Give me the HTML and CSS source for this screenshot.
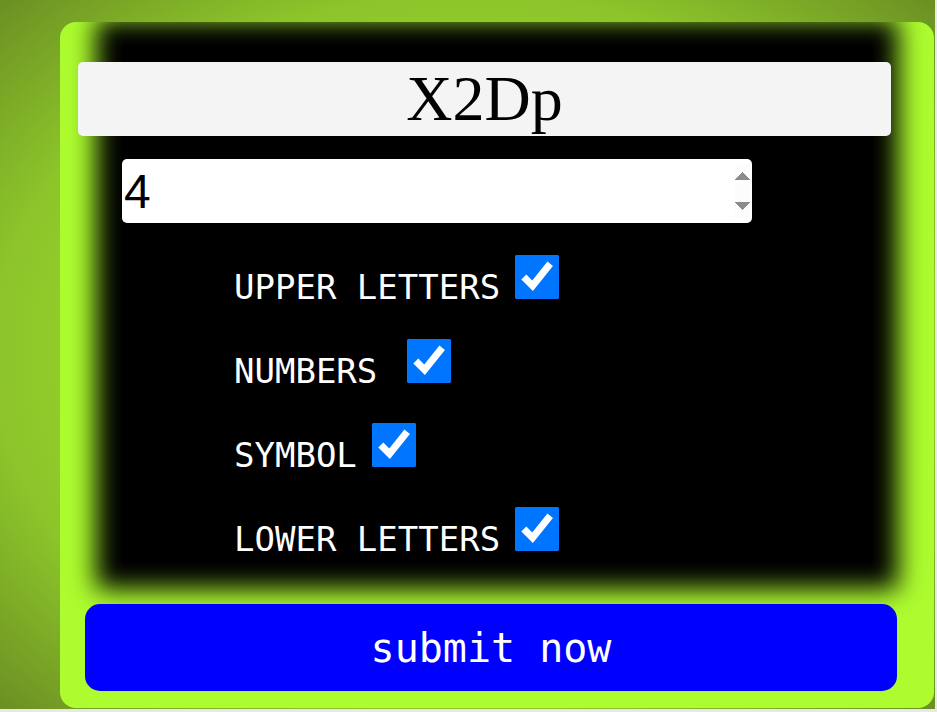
FILE: index.html
```html
<!DOCTYPE html>
<html lang="en">
<head>
<meta charset="utf-8">
<title>X2Dp</title>
<link rel="stylesheet" href="styles.css">
</head>
<body>
<form class="card">
  <div class="panel">
    <div class="title">X2Dp</div>
    <input class="length" type="number" value="4">
    <div class="options">
      <div class="opt"><span class="opt-label">UPPER LETTERS</span><input class="opt-box" type="checkbox" checked></div>
      <div class="opt"><span class="opt-label">NUMBERS</span><input class="opt-box opt-box-wide" type="checkbox" checked></div>
      <div class="opt"><span class="opt-label">SYMBOL</span><input class="opt-box" type="checkbox" checked></div>
      <div class="opt"><span class="opt-label">LOWER LETTERS</span><input class="opt-box" type="checkbox" checked></div>
    </div>
  </div>
  <button class="submit" type="button">submit now</button>
</form>
</body>
</html>
```
FILE: styles.css
```css
html {
  background: #e8e8e8;
  height: 100%;
}

body {
  margin: 0 2px 0 0;
  height: 709px;
  box-sizing: border-box;
  padding: 22px 0 0 60px;
  background: radial-gradient(ellipse at center, #a6f02e 0%, #97d52b 50%, #8cc42a 72%, #6b8f23 100%);
  overflow: hidden;
}

.card {
  margin: 0;
  width: 874px;
  height: 686px;
  background: #adfc2f;
  border-radius: 16px;
  overflow: hidden;
}

.panel {
  margin: 23px 62px 0;
  height: 518px;
  box-sizing: border-box;
  padding-top: 17px;
  background: #000;
  box-shadow: 0 0 24px 26px #000;
}

.title {
  margin-left: -44px;
  width: 813px;
  height: 74px;
  line-height: 74px;
  background: #f4f4f4;
  border-radius: 5px;
  text-align: center;
  font-family: "Liberation Serif", "Times New Roman", serif;
  font-size: 64px;
  color: #000;
}

.length {
  display: block;
  margin: 23px 0 0 0;
  width: 630px;
  height: 64px;
  box-sizing: border-box;
  padding: 7px 2px;
  border: none;
  border-radius: 5px;
  background: #fff;
  font-family: "Liberation Sans", Arial, sans-serif;
  font-size: 48px;
  color: #000;
  outline: none;
}

.length::-webkit-inner-spin-button {
  opacity: 1;
}

.options {
  margin-top: 22px;
  padding-left: 112px;
}

.opt {
  height: 84px;
  line-height: 84px;
  font-family: "DejaVu Sans Mono", monospace;
  font-size: 34px;
  color: #fff;
  white-space: nowrap;
}

.opt-box {
  width: 44px;
  height: 44px;
  margin: 0 0 0 15px;
  vertical-align: baseline;
  accent-color: #0075ff;
}

.opt-box-wide {
  margin-left: 30px;
}

.submit {
  display: block;
  margin: 41px 0 0 25px;
  width: 812px;
  height: 87px;
  padding: 0;
  border: none;
  border-radius: 15px;
  background: #0000ff;
  color: #fff;
  font-family: "DejaVu Sans Mono", monospace;
  font-size: 40px;
}
```
